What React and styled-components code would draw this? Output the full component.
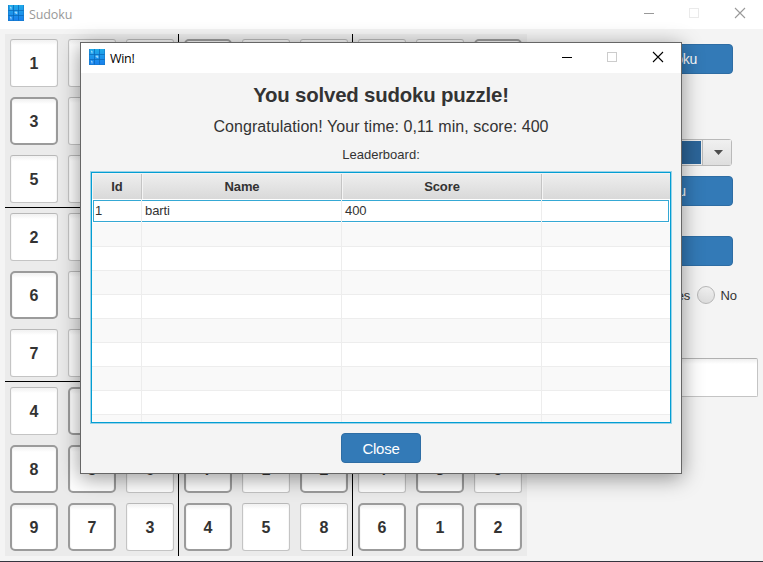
import React from "react";
import styled, { createGlobalStyle } from "styled-components";

const GlobalStyle = createGlobalStyle`
  *, *::before, *::after { box-sizing: border-box; }
  body { margin: 0; overflow: hidden; background: #f4f4f4; }
`;

const Window = styled.main`
  position: relative;
  width: 763px;
  height: 562px;
  display: flex;
  flex-direction: column;
  overflow: hidden;
  background: #f4f4f4;
  border-bottom: 1px solid #35353f;
  color: #333;
  font: 13px "Liberation Sans", Arial, sans-serif;
  white-space: nowrap;
`;

const TitleBar = styled.header`
  display: flex;
  flex: none;
  align-items: flex-start;
  height: ${(p) => (p.$active ? 30 : 29)}px;
  padding-top: ${(p) => (p.$active ? 6 : 5)}px;
  padding-left: 8px;
  background: #fff;
  color: ${(p) => (p.$active ? "#000" : "#999")};
`;

const TitleText = styled.span`
  flex: 1;
  margin-left: 5px;
  padding-top: 1px;
  font: 12.5px/18px "Open Sans", "Noto Sans", sans-serif;
  letter-spacing: ${(p) => (p.$active ? "-0.3px" : "-0.1px")};
`;

const Controls = styled.svg`
  flex: none;
  width: 119px;
  height: 16px;
`;

const Content = styled.div`
  display: flex;
  flex: 1;
  padding: 5px;
`;

const Board = styled.div`
  display: grid;
  grid-template-columns: repeat(9, 58px);
  grid-auto-rows: 58px;
  background: #ebebeb;
`;

const CellSlot = styled.div`
  padding: 5px;
  border-right: ${(p) => (p.$right ? "1px solid #000" : "0")};
  border-bottom: ${(p) => (p.$bottom ? "1px solid #000" : "0")};
`;

const Cell = styled.div`
  width: 48px;
  height: 48px;
  display: flex;
  align-items: center;
  justify-content: center;
  padding-top: 2px;
  border: ${(p) => (p.$fixed ? "2px solid #9b9b9b" : "1px solid #c4c4c4")};
  border-top-color: ${(p) => (p.$fixed ? "#9b9b9b" : "#b8b8b8")};
  border-radius: ${(p) => (p.$fixed ? 5 : 3)}px;
  background: linear-gradient(#f0f0f0, #fff 5px);
  box-shadow: inset 1px 0 1px #f7f7f7, inset -1px 0 1px #f7f7f7;
  font-size: 16px;
  font-weight: bold;
`;

const Sidebar = styled.aside`
  display: flex;
  flex-direction: column;
  align-items: center;
  width: 226px;
  margin-left: 5px;
  padding-top: 10px;
`;

const Button = styled.button`
  width: ${(p) => p.$width}px;
  height: 30px;
  margin: ${(p) => p.$margin || 0};
  padding: 0;
  border: 1px solid #2e6da4;
  border-radius: 4px;
  background: #337ab7;
  color: #fff;
  font: ${(p) => p.$size || 14}px "Liberation Sans", Arial, sans-serif;
  letter-spacing: -0.22px;
`;

const Combo = styled.div`
  display: flex;
  width: 175px;
  height: 27px;
  margin: 65px 1px 0 0;
  border: 1px solid #b9b9b9;
  border-radius: 3px;
  background: #eee;
`;

const ComboValue = styled.div`
  flex: 1;
  margin: 1px;
  background: #2c6599;
`;

const ComboArrow = styled.div`
  display: flex;
  align-items: center;
  justify-content: center;
  width: 29px;
  padding-left: 2px;
  border-left: 1px solid #b9b9b9;
  background: linear-gradient(#f0f0f0, #dedede);
`;

const RadioGroup = styled.div`
  display: flex;
  align-items: center;
  align-self: flex-end;
  height: 20px;
  margin: 19px 21px 0 0;
`;

const RadioLabel = styled.label`
  display: flex;
  align-items: center;
  gap: 5px;
  margin-left: 7px;
`;

const RadioDot = styled.span`
  width: 18px;
  height: 18px;
  border: 1px solid #b7b7b7;
  border-radius: 50%;
  background: linear-gradient(#efefef, #dcdcdc);
`;

const Field = styled.div`
  width: 226px;
  height: 39px;
  margin-top: 53px;
  border: 1px solid #c4c4c4;
  border-top-color: #b0b0b0;
  border-radius: 2px;
  background: linear-gradient(#efefef, #fff 5px);
`;

const Dialog = styled.section`
  position: absolute;
  left: 80px;
  top: 42px;
  width: 602px;
  height: 432px;
  display: flex;
  flex-direction: column;
  border: 1px solid #666;
  background: #f4f4f4;
  box-shadow: 0 4px 20px rgba(0, 0, 0, 0.42);
`;

const DialogBody = styled.div`
  display: flex;
  flex: 1;
  flex-direction: column;
  align-items: center;
  padding: 10px 10px;
`;

const Heading = styled.h1`
  margin: 0;
  height: 24px;
  font-size: 20.4px;
  letter-spacing: -0.18px;
  line-height: 24px;
`;

const Message = styled.p`
  margin: 10px 0 0;
  font-size: 16px;
  line-height: 20px;
  letter-spacing: 0.06px;
`;

const Caption = styled.p`
  margin: 10px 0 0;
  font-size: 13px;
  line-height: 16px;
  letter-spacing: 0.03px;
`;

const Table = styled.div`
  width: 580px;
  height: 251px;
  flex: none;
  margin-top: 9px;
  overflow: hidden;
  border: 1px solid #039ed3;
  box-shadow: 0 0 0 1px #9bd3e8;
  background: #fff;
`;

const HeadRow = styled.div`
  display: grid;
  grid-template-columns: 50px 200px 200px 1fr;
  height: 26px;
  border-bottom: 1px solid #c4c4c4;
`;

const HeadCell = styled.div`
  padding-right: 1px;
  border: solid #f4f4f4;
  border-width: 1px 0 0 1px;
  background: linear-gradient(#eeeeee, #d9d9d9);
  box-shadow: inset -1px 0 #c4c4c4;
  font-size: 13px;
  font-weight: bold;
  line-height: 25px;
  text-align: center;
  letter-spacing: -0.1px;

  &:last-child { box-shadow: none; }
`;

const Row = styled.div`
  position: relative;
  display: grid;
  grid-template-columns: 50px 200px 200px 1fr;
  height: 24px;
  background: ${(p) => (p.$striped ? "#f9f9f9" : "#fff")};

  &::before {
    content: "";
    display: ${(p) => (p.$selected ? "block" : "none")};
    position: absolute;
    inset: 1px 1px 1px 1px;
    border: 1px solid #35a8d4;
  }
`;

const DataCell = styled.div`
  position: relative;
  padding-left: 3px;
  border-right: 1px solid #ededed;
  border-bottom: ${(p) => (p.$plain ? "0" : "1px solid #ededed")};
  line-height: 23px;
  letter-spacing: -0.1px;

  &:last-child { border-right: 0; }
`;

function SudokuIcon() {
  return (
    <svg width="16" height="16" viewBox="0 0 16 16" aria-hidden="true">
      <defs>
        <linearGradient id="tile" x1="0" y1="0" x2="0" y2="1">
          <stop offset="0" stopColor="#20abe9" />
          <stop offset="1" stopColor="#187eed" />
        </linearGradient>
      </defs>
      <rect width="16" height="16" fill="url(#tile)" />
      <path d="M5.5 0v16M10.5 0v16M0 5.5h16M0 10.5h16" stroke="#0b68b8" strokeOpacity=".75" />
      <path d="M.5 0v16M15.5 0v16M0 15.5h16" stroke="#1579c9" strokeOpacity=".6" />
      <path d="M2 2.5l1-.5v2.5M7.2 7h1.6v2M7.2 7v1h1.6M2 12.5l1-.5v2.5" stroke="#b8e5ff" strokeWidth=".8" fill="none" />
    </svg>
  );
}

function WindowControls({ active }) {
  return (
    <Controls viewBox="0 0 119 16" shapeRendering="crispEdges" fill="none">
      <path d="M0 8.5h10" stroke="currentColor" />
      <rect x="45.5" y="3.5" width="9" height="9" stroke={active ? "#ccc" : "#eaeaea"} />
      <path d="M91 3l10 10M101 3l-10 10" stroke="currentColor" strokeWidth="1.1" shapeRendering="auto" />
    </Controls>
  );
}

const digits = [
  "153786249",
  "384259176",
  "526314987",
  "218567394",
  "639148725",
  "745923861",
  "421893567",
  "856712439",
  "973458612",
];

const fixed = [
  "000100001",
  "100100010",
  "001010000",
  "000101010",
  "100010001",
  "001000100",
  "010010001",
  "110101010",
  "110100111",
];

const columns = ["Id", "Name", "Score", ""];
const rows = [["1", "barti", "400", ""], ...Array.from({ length: 9 }, () => ["", "", "", ""])];

export default function App() {
  return (
    <>
      <GlobalStyle />
      <Window>
        <TitleBar>
          <SudokuIcon />
          <TitleText>Sudoku</TitleText>
          <WindowControls />
        </TitleBar>
        <Content>
          <Board>
            {digits.flatMap((line, r) =>
              [...line].map((digit, c) => (
                <CellSlot key={`${r}-${c}`} $right={c === 2 || c === 5} $bottom={r === 2 || r === 5}>
                  <Cell $fixed={fixed[r][c] === "1"}>{digit}</Cell>
                </CellSlot>
              ))
            )}
          </Board>
          <Sidebar>
            <Button $width={176}>Generate sudoku</Button>
            <Combo>
              <ComboValue />
              <ComboArrow>
                <svg width="9" height="5" viewBox="0 0 9 5"><path d="M0 0h9L4.5 5z" fill="#4d4d4d" /></svg>
              </ComboArrow>
            </Combo>
            <Button $width={176} $margin="10px 0 0">Solve sudoku</Button>
            <Button $width={176} $margin="30px 0 0">Clear</Button>
            <RadioGroup>
              <RadioLabel><RadioDot />Yes</RadioLabel>
              <RadioLabel><RadioDot />No</RadioLabel>
            </RadioGroup>
            <Field />
          </Sidebar>
        </Content>
        <Dialog role="dialog">
          <TitleBar $active>
            <SudokuIcon />
            <TitleText $active>Win!</TitleText>
            <WindowControls active />
          </TitleBar>
          <DialogBody>
            <Heading>You solved sudoku puzzle!</Heading>
            <Message>Congratulation! Your time: 0,11 min, score: 400</Message>
            <Caption>Leaderboard:</Caption>
            <Table>
              <HeadRow>
                {columns.map((name, i) => <HeadCell key={i}>{name}</HeadCell>)}
              </HeadRow>
              {rows.map((row, r) => (
                <Row key={r} $striped={r % 2 === 1} $selected={r === 0}>
                  {row.map((value, c) => <DataCell key={c} $plain={r === 0}>{value}</DataCell>)}
                </Row>
              ))}
            </Table>
            <Button $width={80} $size={15} $margin="10px 0 0">Close</Button>
          </DialogBody>
        </Dialog>
      </Window>
    </>
  );
}
